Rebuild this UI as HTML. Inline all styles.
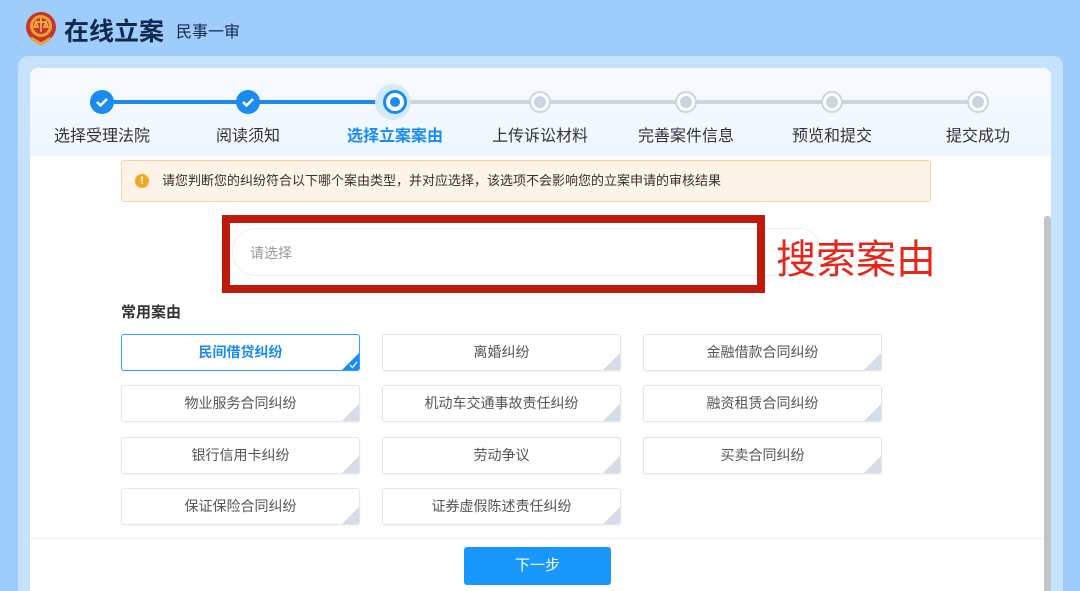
<!DOCTYPE html>
<html style="width:1080px;height:591px;overflow:hidden"><head><meta charset="utf-8"><style>
*{margin:0;padding:0;box-sizing:border-box}
body{width:1080px;height:591px;overflow:hidden;background:#9ecdfc;font-family:"Liberation Sans","Noto Sans CJK SC",sans-serif;position:relative}
.abs{position:absolute}
.outer{left:18px;top:56px;width:1045px;height:560px;background:#c6e2fd;border-radius:10px}
.card{left:30px;top:68px;width:1021px;height:540px;background:#fff;border-radius:8px;overflow:hidden}
.stephead{left:0;top:0;width:1021px;height:88px;background:linear-gradient(#f7fbff,#eef6fe)}
.line{height:4px;top:32px}
.dot{width:24px;height:24px;border-radius:50%;top:22px}
.pd{top:23px;width:22px;height:22px;background:#fff;border:2px solid #c9d5e0}
.pd div{width:12px;height:12px;border-radius:50%;background:#c9d5e0;margin:3px}
.lbl{top:54px;width:140px;text-align:center;font-size:16px;color:#333}
.case{width:239px;height:37px;border:1px solid #e3e6ea;border-radius:3px;background:#fff;text-align:center;line-height:35px;font-size:14px;color:#555;box-shadow:0 1px 2px rgba(0,0,0,.05)}
.case::after{content:"";position:absolute;right:0;bottom:0;width:0;height:0;border-left:17px solid transparent;border-bottom:17px solid #d5dde6}
.case.sel{border-color:#3a9af7;color:#1a8cf0;font-weight:bold}
.case.sel::after{border-bottom-color:#1a8cf0}
</style></head><body>
<svg class="abs" style="left:24px;top:10px" width="34" height="36" viewBox="0 0 34 36"><circle cx="17" cy="17" r="15" fill="#c8352a"/><circle cx="17" cy="16" r="11" fill="#e9a23a"/><circle cx="17" cy="16" r="8" fill="#c8352a"/><path d="M17 8v14M11 12h12M12 12l-2 5h4zM22 12l-2 5h4z" stroke="#f4c04a" stroke-width="1.5" fill="none"/><path d="M7 28l10 6 10-6" stroke="#e9a23a" stroke-width="3" fill="none"/></svg>
<div class="abs" style="left:64px;top:12px;font-size:25px;font-weight:bold;color:#13294b">在线立案</div>
<div class="abs" style="left:176px;top:18px;font-size:16px;color:#13294b">民事一审</div>
<div class="abs outer"></div>
<div class="abs card">
 <div class="abs stephead"></div>
 <div class="abs line" style="left:84px;width:282px;background:#1a8cf0"></div>
 <div class="abs line" style="left:376px;width:575px;background:#c9d5e0"></div>
 <div class="abs dot" style="left:60px;background:#1a8cf0"><svg width="24" height="24"><path d="M7 12l3.5 3.5L17 9" stroke="#fff" stroke-width="2.5" fill="none"/></svg></div>
 <div class="abs dot" style="left:206px;background:#1a8cf0"><svg width="24" height="24"><path d="M7 12l3.5 3.5L17 9" stroke="#fff" stroke-width="2.5" fill="none"/></svg></div>
 <div class="abs" style="left:345px;top:16px;width:36px;height:36px;border-radius:50%;background:#d4e9fc"></div>
 <div class="abs dot" style="left:353px;background:#fff;border:3px solid #1a8cf0"><div style="width:10px;height:10px;border-radius:50%;background:#1a8cf0;margin:4px"></div></div>
 <div class="abs dot pd" style="left:499px"><div></div></div>
 <div class="abs dot pd" style="left:645px"><div></div></div>
 <div class="abs dot pd" style="left:791px"><div></div></div>
 <div class="abs dot pd" style="left:937px"><div></div></div>
 <div class="abs lbl" style="left:2px">选择受理法院</div>
 <div class="abs lbl" style="left:148px">阅读须知</div>
 <div class="abs lbl" style="left:295px;color:#1a8cf0;font-weight:bold">选择立案案由</div>
 <div class="abs lbl" style="left:440px">上传诉讼材料</div>
 <div class="abs lbl" style="left:586px">完善案件信息</div>
 <div class="abs lbl" style="left:732px">预览和提交</div>
 <div class="abs lbl" style="left:878px">提交成功</div>
 <div class="abs" style="left:91px;top:92px;width:810px;height:42px;background:#fdf3e6;border:1px solid #f5d3a3;border-radius:3px;font-size:13px;color:#333;line-height:40px;padding-left:40px">请您判断您的纠纷符合以下哪个案由类型，并对应选择，该选项不会影响您的立案申请的审核结果</div>
 <div class="abs" style="left:105px;top:106px;width:14px;height:14px;border-radius:50%;background:#f5a623;color:#fff;font-size:11px;text-align:center;line-height:14px;font-weight:bold">!</div>
 <div class="abs" style="left:1014px;top:148px;width:7px;height:400px;background:#c4c4c4;border-radius:3px"></div>
 <div class="abs" style="left:202px;top:160px;width:590px;height:48px;border:1px solid #eceef1;border-radius:24px"></div>
 <div class="abs" style="left:192px;top:147px;width:543px;height:78px;border:8px solid #be1a0c"></div>
 <div class="abs" style="left:220px;top:175px;font-size:14px;color:#999">请选择</div>
 <div class="abs" style="left:746px;top:160px;font-size:40px;color:#e5261b;font-family:'Noto Sans CJK SC',sans-serif;line-height:56px">搜索案由</div>
 <div class="abs" style="left:91px;top:233px;font-size:15px;font-weight:bold;color:#333">常用案由</div>
 <div class="abs case sel" style="left:91px;top:266px">民间借贷纠纷<svg style="position:absolute;right:1px;bottom:1px;z-index:1" width="9" height="8"><path d="M1 4l2.5 2.5L8 1" stroke="#fff" stroke-width="1.3" fill="none"/></svg></div>
 <div class="abs case" style="left:352px;top:266px">离婚纠纷</div>
 <div class="abs case" style="left:613px;top:266px">金融借款合同纠纷</div>
 <div class="abs case" style="left:91px;top:317px">物业服务合同纠纷</div>
 <div class="abs case" style="left:352px;top:317px">机动车交通事故责任纠纷</div>
 <div class="abs case" style="left:613px;top:317px">融资租赁合同纠纷</div>
 <div class="abs case" style="left:91px;top:369px">银行信用卡纠纷</div>
 <div class="abs case" style="left:352px;top:369px">劳动争议</div>
 <div class="abs case" style="left:613px;top:369px">买卖合同纠纷</div>
 <div class="abs case" style="left:91px;top:420px">保证保险合同纠纷</div>
 <div class="abs case" style="left:352px;top:420px">证券虚假陈述责任纠纷</div>
 <div class="abs" style="left:0;top:470px;width:1014px;height:1px;background:#eef0f3"></div>
 <div class="abs" style="left:434px;top:479px;width:147px;height:38px;background:#1898fa;border-radius:3px;color:#fff;font-size:15px;text-align:center;line-height:38px">下一步</div>
</div>
</body></html>
